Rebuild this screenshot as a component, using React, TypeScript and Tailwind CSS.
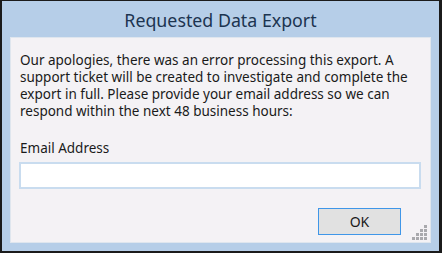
import React from "react";

function Grip() {
  const dots: [number, number][] = [];
  for (let r = 0; r < 4; r++) {
    for (let c = 3 - r; c < 4; c++) {
      dots.push([c * 4, r * 4]);
    }
  }
  return (
    <svg width="15" height="15" viewBox="0 0 15 15" className="absolute right-[3px] bottom-[2px]">
      {dots.map(([x, y], i) => (
        <rect key={i} x={x} y={y} width="3" height="3" fill="#a9a9ad" />
      ))}
    </svg>
  );
}

export default function App() {
  const font = { fontFamily: '"Noto Sans", "Open Sans", sans-serif' };
  return (
    <div className="w-[442px] h-[254px] bg-white">
      <div className="w-[442px] h-[253px] border-l-2 border-t border-r-[3px] border-b-2 border-[#1b1b1b] bg-[#b6cee8] flex flex-col">
        <div
          className="h-[36px] flex items-center justify-center text-[17.8px] text-[#1c3450] pt-[2px]"
          style={font}
        >
          Requested Data Export
        </div>
        <div className="mx-[8px] mb-[8px] flex-1 bg-[#f4f2f5] border border-[#dfe6ee] relative flex flex-col" style={font}>
          <div className="pl-[9px] pt-[14px] text-[13.5px] leading-[17px] text-[#1a1a1a] whitespace-nowrap">
            <div>Our apologies, there was an error processing this export. A</div>
            <div>support ticket will be created to investigate and complete the</div>
            <div>export in full. Please provide your email address so we can</div>
            <div>respond within the next 48 business hours:</div>
          </div>
          <div className="pl-[9px] mt-[20px] text-[13.5px] leading-[17px] text-[#1a1a1a]">Email Address</div>
          <div className="ml-[8px] mr-[9px] mt-[5px] h-[27px] bg-white border-2 border-[#c9dcef]" />
          <div className="flex justify-end mr-[29px] mt-[19px]">
            <div className="w-[83px] h-[27px] bg-[#e1e1e1] border border-[#3f96e8] flex items-center justify-center text-[14px] text-[#1a1a1a]">
              OK
            </div>
          </div>
          <Grip />
        </div>
      </div>
    </div>
  );
}
